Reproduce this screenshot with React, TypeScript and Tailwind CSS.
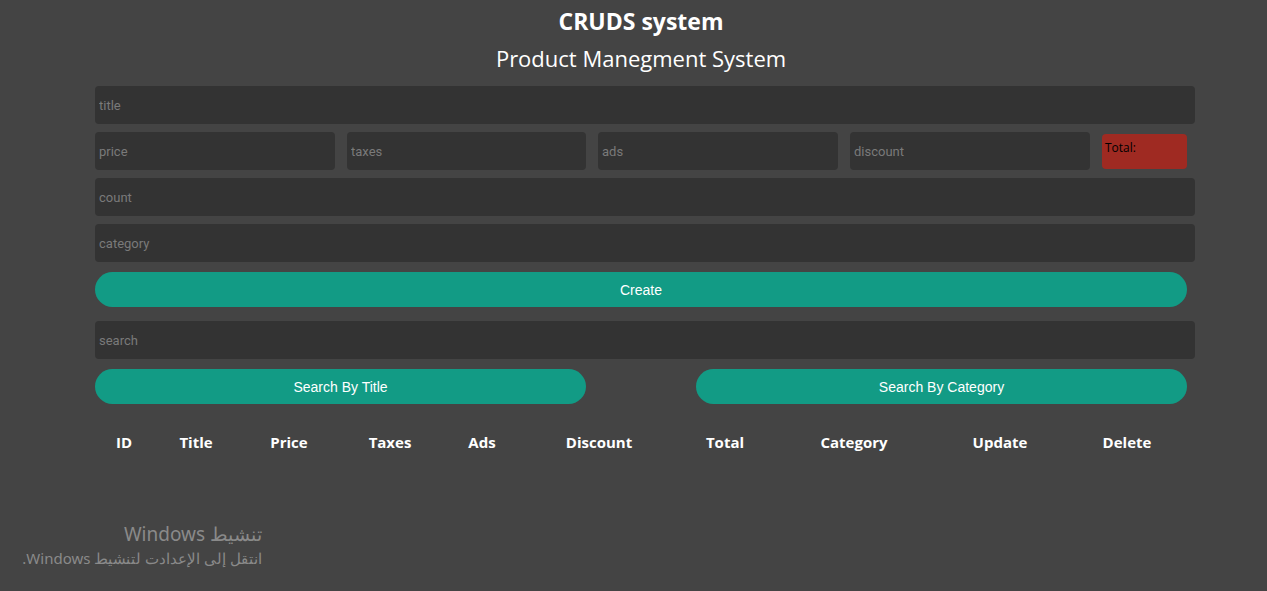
import React from "react";

const cols = ["ID", "Title", "Price", "Taxes", "Ads", "Discount", "Total", "Category", "Update", "Delete"];

function Field({ ph, cls = "" }: { ph: string; cls?: string }) {
  return (
    <input
      placeholder={ph}
      className={`h-[38px] rounded bg-[#333333] px-1 text-[13px] text-white outline-none placeholder:text-[#7a7a7a] ${cls}`}
      style={{ fontFamily: "Roboto, Arial, sans-serif" }}
    />
  );
}

export default function App() {
  return (
    <div className="relative min-h-[591px] bg-[#444444] text-white" style={{ fontFamily: "'Open Sans', 'Noto Sans', sans-serif" }}>
      <div className="ml-[95px] w-[1100px] pt-[4px]">
        <div className="text-center pr-[8px]">
          <h2 className="text-[23px] font-bold leading-[34px]">CRUDS system</h2>
          <p className="text-[22px] leading-[40px]">Product Manegment System</p>
        </div>

        <div className="mt-[8px] flex flex-col gap-[8px]">
          <Field ph="title" cls="w-full" />
          <div className="flex items-center gap-[12px]">
            <Field ph="price" cls="w-[240px]" />
            <Field ph="taxes" cls="w-[239px]" />
            <Field ph="ads" cls="w-[240px]" />
            <Field ph="discount" cls="w-[240px]" />
            <div className="h-[35px] w-[85px] rounded bg-[#9f2a22] px-[3px] pt-[5px] text-[12px] text-black" style={{ fontFamily: "'Open Sans', sans-serif" }}>
              Total:
            </div>
          </div>
          <Field ph="count" cls="w-full" />
          <Field ph="category" cls="w-full" />
        </div>

        <button className="mt-[10px] h-[35px] w-[1092px] rounded-[18px] bg-[#129b85] pt-[2px] text-[14px] text-white" style={{ fontFamily: "Arial, 'Liberation Sans', sans-serif" }}>
          Create
        </button>

        <div className="mt-[14px]">
          <Field ph="search" cls="w-full" />
        </div>

        <div className="mt-[10px] flex w-[1092px] justify-between">
          <button className="h-[35px] w-[491px] rounded-[18px] bg-[#129b85] pt-[2px] text-[14px] text-white" style={{ fontFamily: "Arial, 'Liberation Sans', sans-serif" }}>
            Search By Title
          </button>
          <button className="h-[35px] w-[491px] rounded-[18px] bg-[#129b85] pt-[2px] text-[14px] text-white" style={{ fontFamily: "Arial, 'Liberation Sans', sans-serif" }}>
            Search By Category
          </button>
        </div>

        <div className="mt-[27px] grid w-[1092px] grid-cols-[58px_86px_100px_102px_82px_152px_100px_158px_134px_120px] text-center text-[15px] font-bold">
          {cols.map((c) => (
            <div key={c}>{c}</div>
          ))}
        </div>
      </div>

      <div className="absolute left-0 top-[520px] w-[262px] text-right text-[#8a8a8a]" style={{ fontFamily: "'Noto Sans', 'Open Sans', sans-serif" }}>
        <div className="text-[19px] leading-[28px]" dir="rtl">تنشيط Windows</div>
        <div className="text-[15px] leading-[20px] whitespace-nowrap" dir="rtl">انتقل إلى الإعدادت لتنشيط Windows.</div>
      </div>
    </div>
  );
}
